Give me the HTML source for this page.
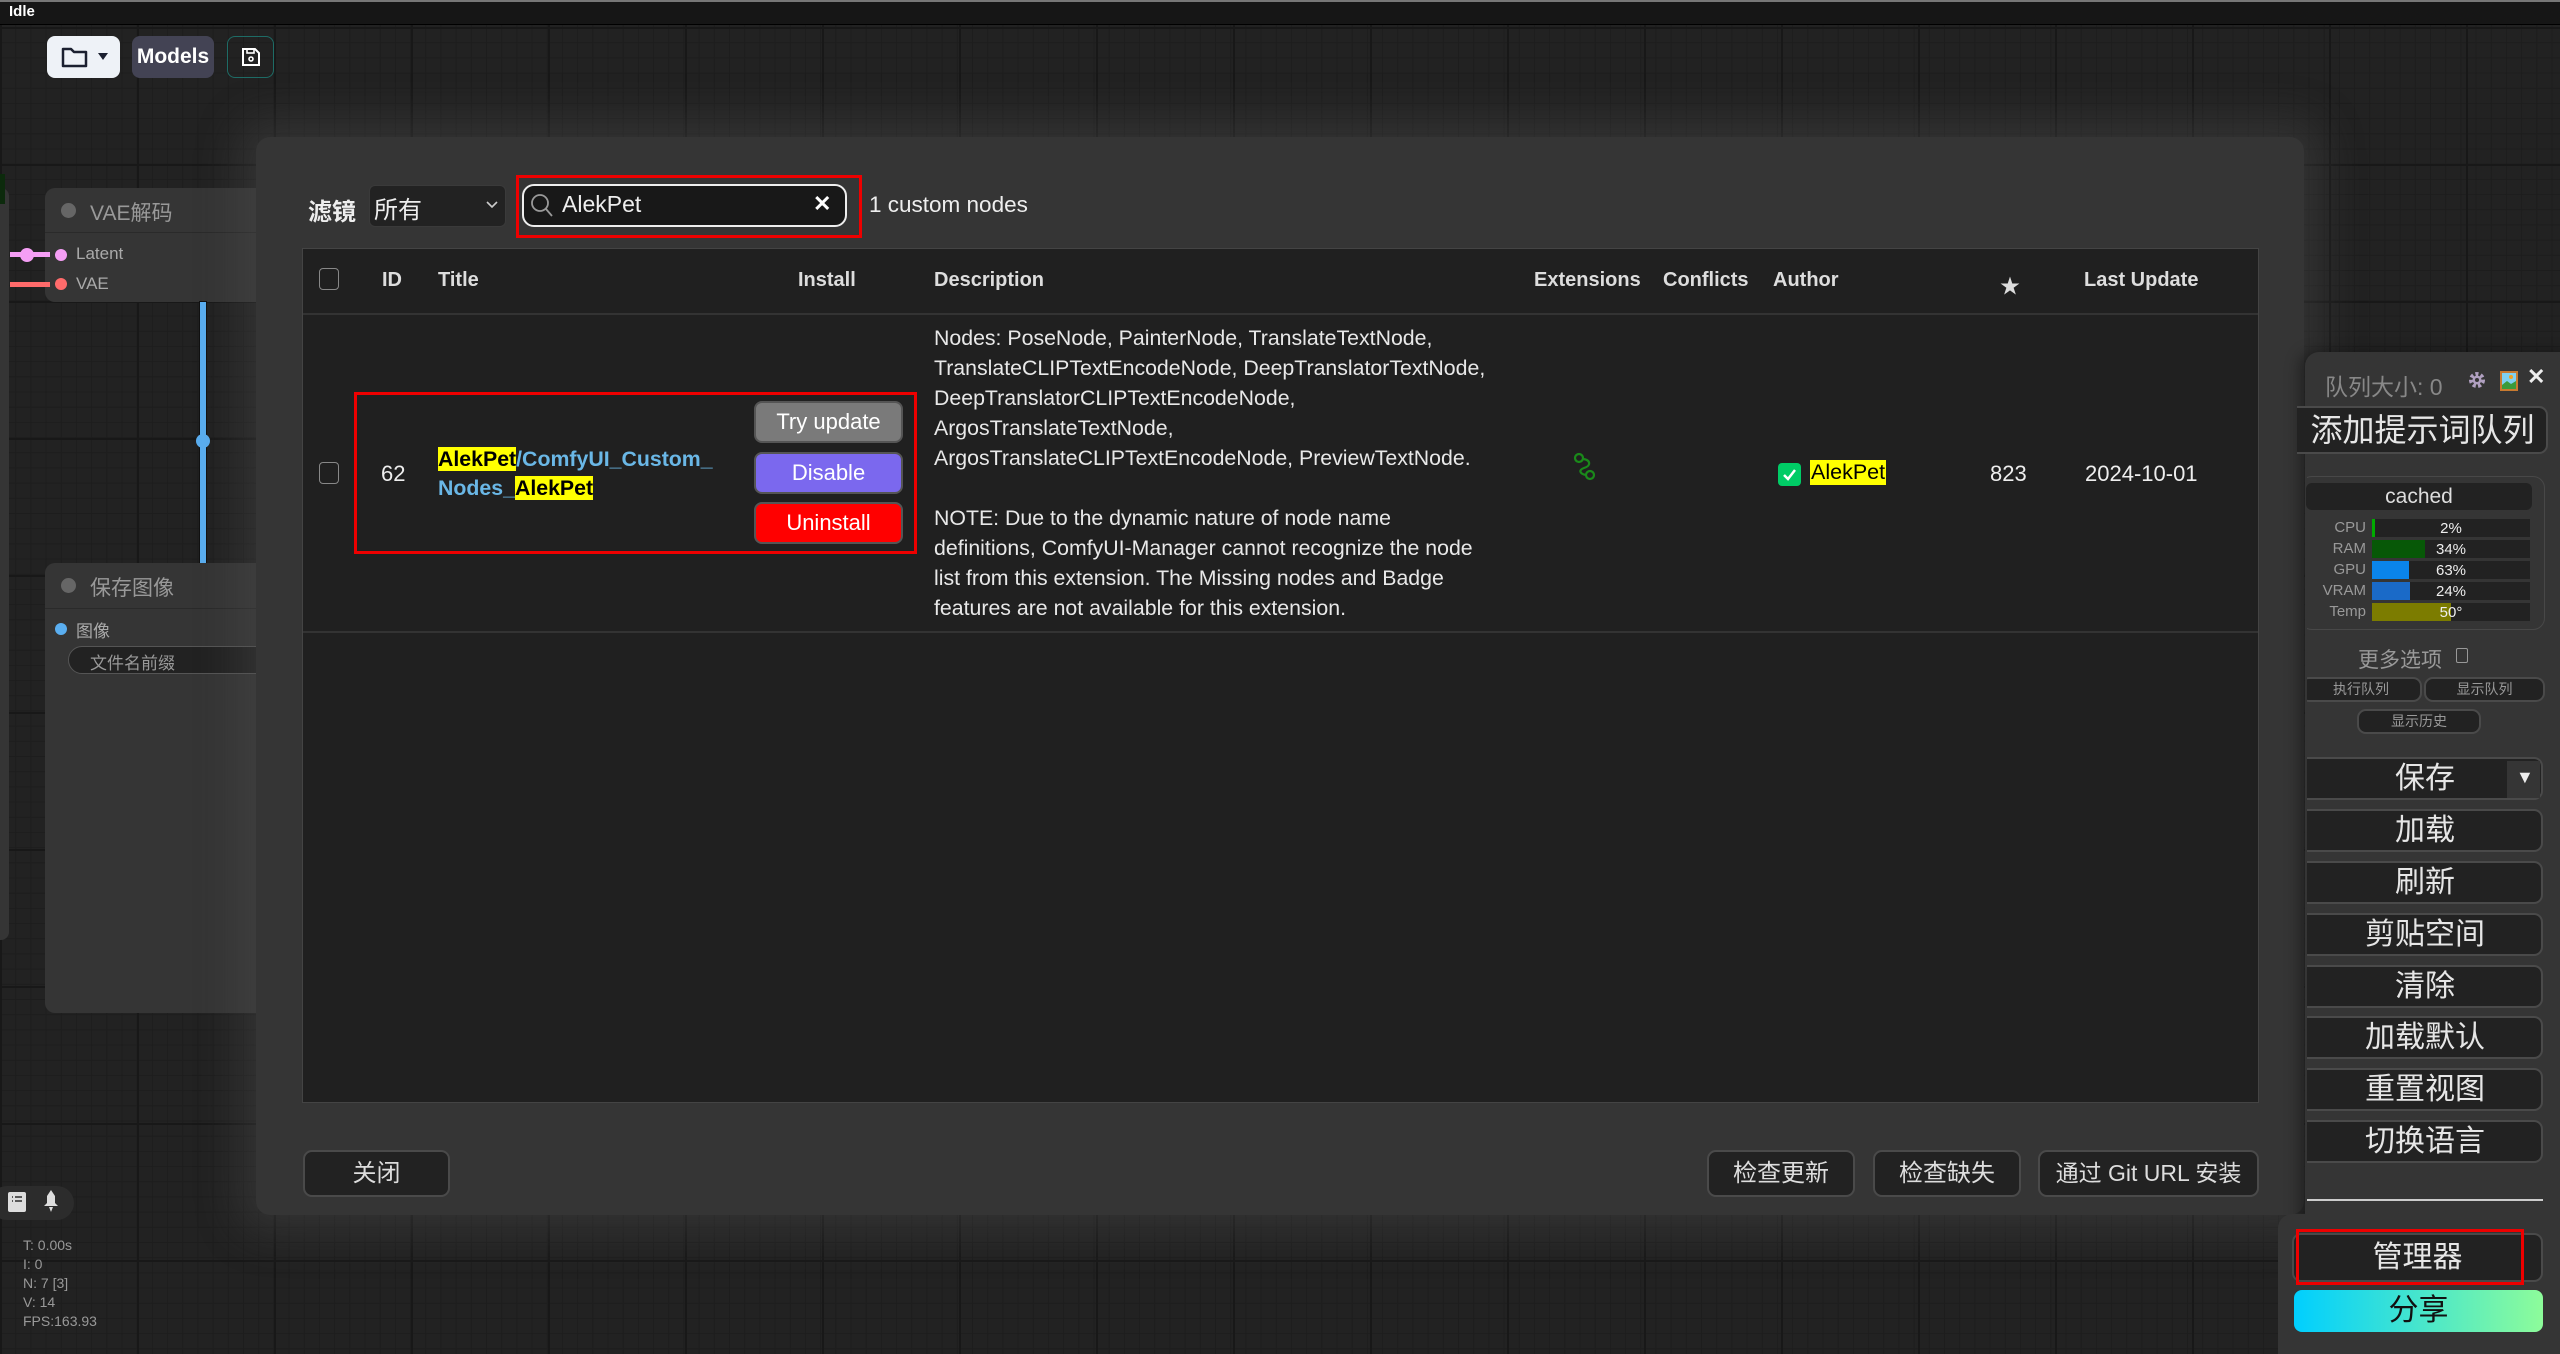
<!DOCTYPE html>
<html><head><meta charset="utf-8"><style>
*{margin:0;padding:0;box-sizing:border-box}
body{width:2560px;height:1347px;overflow:hidden;position:relative;font-family:"Liberation Sans","Noto Sans CJK SC",sans-serif;color:#ddd;
background-color:#222;
background-image:linear-gradient(#181818 2px,transparent 2px),linear-gradient(90deg,#181818 2px,transparent 2px),linear-gradient(#1d1d1d 1px,transparent 1px),linear-gradient(90deg,#1d1d1d 1px,transparent 1px);
background-size:137px 137px,137px 137px,15.2px 15.2px,15.2px 15.2px;background-position:0 27px,0 0,0 27px,0 0}
.a{position:absolute}
.t{position:absolute;white-space:nowrap}
.btn{position:absolute;background:#222;border:2px solid #4a4a4a;border-radius:9px;color:#ddd;text-align:center}
.rb{position:absolute;left:2294px;width:249px;height:43px;background:#222;border:2px solid #4a4a4a;border-radius:9px;color:#e6e6e6;font-size:30px;line-height:39px;text-align:center;clip-path:inset(0 0 0 13px);text-indent:13px}
.hd{position:absolute;top:269px;font-size:20px;font-weight:bold;color:#ddd}
.d{position:absolute;left:934px;font-size:21.3px;color:#e8e8e8;white-space:nowrap}
.lab{position:absolute;width:60px;text-align:right;left:2306px;font-size:15px;color:#999}
.bar{position:absolute;left:2372px;width:158px;height:18px;background:#222}
.bar i{position:absolute;left:0;top:0;height:18px}
.bar span{position:absolute;left:0;right:0;text-align:center;font-size:15px;color:#eee;top:0;line-height:20px}
</style></head><body>
<div class="a" style="left:0;top:0;width:2560px;height:25px;background:#161616;border-top:2px solid #777;border-bottom:1px solid #000"></div>
<div class="t" style="left:9px;top:3px;font-size:15px;font-weight:bold;color:#fff">Idle</div>
<div class="a" style="left:47px;top:36px;width:73px;height:42px;background:#eef2f7;border-radius:8px"></div>
<svg class="a" style="left:60px;top:44px" width="50" height="26" viewBox="0 0 50 26"><path d="M3 5 h8 l3 3 h12 v14 h-23z" fill="none" stroke="#1b2030" stroke-width="2.5" stroke-linejoin="round"/><path d="M38 9 h10 l-5 7z" fill="#1b2030"/></svg>
<div class="a" style="left:132px;top:36px;width:82px;height:42px;background:#434354;border-radius:8px;color:#fff;font-weight:bold;font-size:21px;line-height:42px;text-align:center">Models</div>
<div class="a" style="left:227px;top:36px;width:47px;height:42px;border:1.5px solid #1e6c66;border-radius:8px"></div>
<svg class="a" style="left:240px;top:46px" width="22" height="22" viewBox="0 0 22 22"><path d="M3 3h12l4 4v12H3z" fill="none" stroke="#fff" stroke-width="2"/><rect x="7" y="3" width="7" height="4" fill="none" stroke="#fff" stroke-width="1.6"/><circle cx="11" cy="13" r="2" fill="none" stroke="#fff" stroke-width="1.6"/></svg>

<div class="a" style="left:-20px;top:188px;width:29px;height:752px;background:#353535;border-radius:8px"></div>
<div class="a" style="left:0;top:174px;width:5px;height:30px;background:#0c2a0c"></div>
<div class="a" style="left:45px;top:188px;width:230px;height:114px;background:#353535;border-radius:10px"></div>
<div class="a" style="left:45px;top:232px;width:230px;height:1px;background:#2a2a2a"></div>
<div class="a" style="left:61px;top:203px;width:15px;height:15px;border-radius:50%;background:#666"></div>
<div class="t" style="left:90px;top:197px;font-size:21px;color:#999">VAE解码</div>
<div class="a" style="left:10px;top:252px;width:40px;height:5px;background:#f59ef5"></div>
<div class="a" style="left:20px;top:248px;width:14px;height:14px;border-radius:50%;background:#f59ef5"></div>
<div class="a" style="left:10px;top:282px;width:40px;height:5px;background:#ff6b6b"></div>
<div class="a" style="left:55px;top:249px;width:12px;height:12px;border-radius:50%;background:#f59ef5"></div>
<div class="a" style="left:55px;top:278px;width:12px;height:12px;border-radius:50%;background:#ff6b6b"></div>
<div class="t" style="left:76px;top:244px;font-size:17px;color:#aaa">Latent</div>
<div class="t" style="left:76px;top:274px;font-size:17px;color:#aaa">VAE</div>
<div class="a" style="left:200px;top:302px;width:6px;height:262px;background:#5aaef0;box-shadow:0 0 0 1px #111"></div>
<div class="a" style="left:196px;top:434px;width:14px;height:14px;border-radius:50%;background:#5aaef0"></div>
<div class="a" style="left:45px;top:563px;width:230px;height:450px;background:#353535;border-radius:10px"></div>
<div class="a" style="left:45px;top:608px;width:230px;height:1px;background:#2a2a2a"></div>
<div class="a" style="left:61px;top:578px;width:15px;height:15px;border-radius:50%;background:#666"></div>
<div class="t" style="left:90px;top:572px;font-size:21px;color:#999">保存图像</div>
<div class="a" style="left:55px;top:623px;width:12px;height:12px;border-radius:50%;background:#5aaef0"></div>
<div class="t" style="left:76px;top:617px;font-size:17px;color:#aaa">图像</div>
<div class="a" style="left:68px;top:646px;width:220px;height:28px;border:1.5px solid #555;border-radius:14px;background:#222"></div>
<div class="t" style="left:90px;top:649px;font-size:17px;color:#999">文件名前缀</div>

<div class="a" style="left:-10px;top:1186px;width:84px;height:34px;background:#2c2c2c;border-radius:17px"></div>
<svg class="a" style="left:8px;top:1192px" width="18" height="20" viewBox="0 0 18 20"><rect x="0" y="0" width="18" height="20" rx="2" fill="#ddd"/><g stroke="#2c2c2c" stroke-width="1.6"><path d="M4 5h1M7 5h7M4 9h1M7 9h7"/></g></svg>
<svg class="a" style="left:42px;top:1190px" width="18" height="24" viewBox="0 0 18 24"><path d="M9 0 L13 6 V13 L16 16 H2 L5 13 V6Z" fill="#ddd"/><path d="M7 17h4l-2 5z" fill="#ddd"/></svg>
<div class="a" style="left:23px;top:1236px;font-size:14px;line-height:19px;color:#999">T: 0.00s<br>I: 0<br>N: 7 [3]<br>V: 14<br>FPS:163.93</div>

<div class="a" style="left:256px;top:137px;width:2048px;height:1078px;background:#353535;border-radius:14px;box-shadow:0 0 40px 20px rgba(80,80,80,.35)"></div>
<div class="t" style="left:308px;top:192px;font-size:24px;font-weight:bold;color:#eee">滤镜</div>
<div class="a" style="left:369px;top:185px;width:137px;height:42px;background:#222;border:1.5px solid #3a3a3a;border-radius:6px"></div>
<div class="t" style="left:374px;top:190px;font-size:24px;color:#eee">所有</div>
<svg class="a" style="left:486px;top:200px" width="12" height="10" viewBox="0 0 12 10"><path d="M1 2l5 5 5-5" fill="none" stroke="#ccc" stroke-width="1.6"/></svg>
<div class="a" style="left:516px;top:175px;width:346px;height:63px;border:3px solid #e00"></div>
<div class="a" style="left:522px;top:184px;width:325px;height:43px;background:#181818;border:2.5px solid #eee;border-radius:12px"></div>
<svg class="a" style="left:530px;top:193px" width="24" height="26" viewBox="0 0 24 26"><circle cx="10" cy="10" r="8" fill="none" stroke="#999" stroke-width="1.8"/><path d="M16 16l6 7" stroke="#999" stroke-width="1.8"/></svg>
<div class="t" style="left:562px;top:191px;font-size:23px;color:#eee">AlekPet</div>
<div class="t" style="left:813px;top:191px;font-size:22px;font-weight:bold;color:#fff">✕</div>
<div class="t" style="left:869px;top:192px;font-size:22.5px;color:#eee">1 custom nodes</div>

<div class="a" style="left:302px;top:248px;width:1957px;height:855px;background:#202020;border:1.5px solid #444"></div>
<div class="a" style="left:303px;top:313px;width:1955px;height:2px;background:#333"></div>
<div class="a" style="left:303px;top:631px;width:1955px;height:2px;background:#333"></div>
<div class="a" style="left:319px;top:268px;width:20px;height:22px;border:1.5px solid #888;border-radius:4px"></div>
<div class="hd" style="left:382px">ID</div>
<div class="hd" style="left:438px">Title</div>
<div class="hd" style="left:798px">Install</div>
<div class="hd" style="left:934px">Description</div>
<div class="hd" style="left:1534px">Extensions</div>
<div class="hd" style="left:1663px">Conflicts</div>
<div class="hd" style="left:1773px">Author</div>
<div class="hd" style="left:2000px;top:270px">★</div>
<div class="hd" style="left:2084px">Last Update</div>

<div class="a" style="left:319px;top:462px;width:20px;height:22px;border:1.5px solid #888;border-radius:4px"></div>
<div class="t" style="left:381px;top:461px;font-size:22px;color:#eee">62</div>
<div class="a" style="left:354px;top:392px;width:563px;height:162px;border:3px solid #e00"></div>
<div class="t" style="left:438px;top:445px;font-size:21.3px;font-weight:bold;color:#6ab7e6;line-height:29px"><span style="background:#ff0;color:#000">AlekPet</span>/ComfyUI_Custom_<br>Nodes_<span style="background:#ff0;color:#000">AlekPet</span></div>
<div class="a" style="left:754px;top:401px;width:149px;height:42px;background:#7a7a7a;border:2px solid #555;border-radius:8px;color:#fff;font-size:22px;line-height:38px;text-align:center">Try update</div>
<div class="a" style="left:754px;top:452px;width:149px;height:42px;background:#7b68ee;border:2px solid #555;border-radius:8px;color:#fff;font-size:22px;line-height:38px;text-align:center">Disable</div>
<div class="a" style="left:754px;top:502px;width:149px;height:42px;background:#f00;border:2px solid #555;border-radius:8px;color:#fff;font-size:22px;line-height:38px;text-align:center">Uninstall</div>
<div class="d" style="top:326px">Nodes: PoseNode, PainterNode, TranslateTextNode,</div>
<div class="d" style="top:356px">TranslateCLIPTextEncodeNode, DeepTranslatorTextNode,</div>
<div class="d" style="top:386px">DeepTranslatorCLIPTextEncodeNode,</div>
<div class="d" style="top:416px">ArgosTranslateTextNode,</div>
<div class="d" style="top:446px">ArgosTranslateCLIPTextEncodeNode, PreviewTextNode.</div>
<div class="d" style="top:506px">NOTE: Due to the dynamic nature of node name</div>
<div class="d" style="top:536px">definitions, ComfyUI-Manager cannot recognize the node</div>
<div class="d" style="top:566px">list from this extension. The Missing nodes and Badge</div>
<div class="d" style="top:596px">features are not available for this extension.</div>
<svg class="a" style="left:1573px;top:452px" width="24" height="30" viewBox="0 0 24 30"><circle cx="6" cy="6" r="4" fill="none" stroke="#1a8a1a" stroke-width="2.2"/><circle cx="17" cy="23" r="4" fill="none" stroke="#1a8a1a" stroke-width="2.2"/><path d="M10 7 c8 1 8 7 1 9 c-6 2 -4 6 2 7" fill="none" stroke="#1a8a1a" stroke-width="2.2"/></svg>
<div class="a" style="left:1778px;top:463px;width:23px;height:23px;background:#0c6;border-radius:4px"></div>
<svg class="a" style="left:1781px;top:466px" width="17" height="17" viewBox="0 0 17 17"><path d="M3 9l4 4 7-9" fill="none" stroke="#fff" stroke-width="2.5"/></svg>
<div class="t" style="left:1810px;top:460px;font-size:21.5px;color:#000;background:#ff0;padding:0 1px">AlekPet</div>
<div class="t" style="left:1990px;top:461px;font-size:22px;color:#eee">823</div>
<div class="t" style="left:2085px;top:461px;font-size:22px;color:#eee">2024-10-01</div>

<div class="btn" style="left:303px;top:1150px;width:147px;height:47px;font-size:24px;line-height:43px">关闭</div>
<div class="btn" style="left:1707px;top:1150px;width:148px;height:47px;font-size:24px;line-height:43px">检查更新</div>
<div class="btn" style="left:1873px;top:1150px;width:148px;height:47px;font-size:24px;line-height:43px">检查缺失</div>
<div class="btn" style="left:2038px;top:1150px;width:221px;height:47px;font-size:23px;line-height:43px">通过 Git URL 安装</div>

<div class="a" style="left:2305px;top:352px;width:270px;height:880px;background:#353535;border-radius:14px 0 0 0;box-shadow:-6px 0 14px rgba(0,0,0,.35)"></div>
<div class="a" style="left:2278px;top:1214px;width:290px;height:140px;background:#353535;border-radius:14px 0 0 0"></div>
<div class="t" style="left:2325px;top:368px;font-size:23px;color:#888">队列大小: 0</div>
<svg class="a" style="left:2467px;top:370px" width="20" height="20" viewBox="0 0 20 20"><circle cx="10" cy="10" r="6" fill="none" stroke="#b0a0c0" stroke-width="4" stroke-dasharray="3 2.3"/><circle cx="10" cy="10" r="4.5" fill="#b0a0c0"/><circle cx="10" cy="10" r="2" fill="#353535"/></svg>
<svg class="a" style="left:2499px;top:370px" width="20" height="22" viewBox="0 0 20 22"><rect x="1" y="1" width="18" height="20" fill="#c87a30"/><rect x="3" y="3" width="14" height="16" fill="#7fd0f0"/><path d="M3 15 l5-4 4 3 5-3 v8 h-14z" fill="#3a9a3a"/><circle cx="12" cy="7" r="2" fill="#f0a020"/></svg>
<div class="t" style="left:2527px;top:364px;font-size:22px;font-weight:bold;color:#eee">✕</div>
<div class="rb" style="top:406px;height:48px;line-height:44px;font-size:32px;left:2284px;width:264px">添加提示词队列</div>
<div class="a" style="left:2300px;top:476px;width:245px;height:154px;border:1.5px solid #484848;border-radius:12px;clip-path:inset(0 0 0 7px)"></div>
<div class="a" style="left:2306px;top:483px;width:226px;height:27px;background:#222;border-radius:6px;text-align:center;font-size:21px;line-height:27px;color:#ddd">cached</div>
<div class="lab" style="top:519px">CPU</div><div class="bar" style="top:519px"><i style="width:3px;background:#0a0"></i><span>2%</span></div>
<div class="lab" style="top:540px">RAM</div><div class="bar" style="top:540px"><i style="width:53px;background:#075807"></i><span>34%</span></div>
<div class="lab" style="top:561px">GPU</div><div class="bar" style="top:561px"><i style="width:37px;background:#0a84ea"></i><span>63%</span></div>
<div class="lab" style="top:582px">VRAM</div><div class="bar" style="top:582px"><i style="width:38px;background:#1a6ac8"></i><span>24%</span></div>
<div class="lab" style="top:603px">Temp</div><div class="bar" style="top:603px"><i style="width:79px;background:#7c7c00"></i><span>50°</span></div>
<div class="t" style="left:2358px;top:644px;font-size:21px;color:#999">更多选项</div>
<div class="a" style="left:2456px;top:648px;width:12px;height:15px;border:1.5px solid #999;border-radius:2px"></div>
<div class="btn" style="left:2300px;top:677px;width:122px;height:25px;font-size:14px;line-height:21px;color:#999;clip-path:inset(0 0 0 7px)">执行队列</div>
<div class="btn" style="left:2424px;top:677px;width:121px;height:25px;font-size:14px;line-height:21px;color:#999">显示队列</div>
<div class="btn" style="left:2357px;top:709px;width:124px;height:25px;font-size:14px;line-height:21px;color:#999">显示历史</div>
<div class="rb" style="top:757px">保存</div>
<div class="a" style="left:2507px;top:761px;width:33px;height:37px;background:#353535"></div>
<div class="t" style="left:2516px;top:767px;font-size:18px;color:#eee">▼</div>
<div class="rb" style="top:809px">加载</div>
<div class="rb" style="top:861px">刷新</div>
<div class="rb" style="top:913px">剪贴空间</div>
<div class="rb" style="top:965px">清除</div>
<div class="rb" style="top:1016px">加载默认</div>
<div class="rb" style="top:1068px">重置视图</div>
<div class="rb" style="top:1120px">切换语言</div>
<div class="a" style="left:2307px;top:1199px;width:236px;height:2px;background:#ccc"></div>
<div class="a" style="left:2292px;top:1233px;width:251px;height:49px;background:#222;border:2px solid #4a4a4a;border-radius:9px;color:#e6e6e6;font-size:30px;line-height:45px;text-align:center">管理器</div>
<div class="a" style="left:2296px;top:1229px;width:228px;height:56px;border:3px solid #e00"></div>
<div class="a" style="left:2294px;top:1290px;width:249px;height:42px;border-radius:8px;background:linear-gradient(90deg,#00cfff,#8dfc9a);color:#111;font-size:30px;line-height:42px;text-align:center">分享</div>
</body></html>
